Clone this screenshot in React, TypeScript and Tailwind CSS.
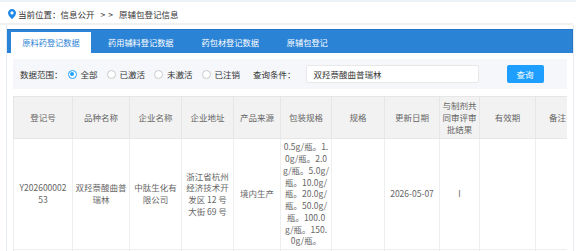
import React from "react";

const font = { fontFamily: '"Noto Sans CJK SC", "Noto Sans", sans-serif' };

function Radio({ checked, label }: { checked?: boolean; label: string }) {
  return (
    <div className="flex items-center">
      <span
        className={
          checked
            ? "w-[9px] h-[9px] rounded-full border border-[#1e9fff] bg-white flex items-center justify-center"
            : "w-[9px] h-[9px] rounded-full border border-[#c9c9c9] bg-white"
        }
      >
        {checked && <span className="w-[4px] h-[4px] rounded-full bg-[#1e9fff]" />}
      </span>
      <span className="ml-[4px] text-[#333]">{label}</span>
    </div>
  );
}

const cols = [59, 57, 52, 52, 47, 51, 53, 55, 40, 56, 44];
const headers = ["登记号", "品种名称", "企业名称", "企业地址", "产品来源", "包装规格", "规格", "更新日期", "与制剂共同审评审批结果", "有效期", "备注"];
const row = [
  "Y20260000253",
  "双羟萘酸曲普瑞林",
  "中肽生化有限公司",
  "浙江省杭州经济技术开发区 12 号大街 69 号",
  "境内生产",
  "0.5g/瓶。1.0g/瓶。2.0g/瓶。5.0g/瓶。10.0g/瓶。20.0g/瓶。50.0g/瓶。100.0g/瓶。150.0g/瓶。",
  "",
  "2026-05-07",
  "I",
  "",
  "",
];

export default function App() {
  return (
    <div className="w-[576px] h-[251px] overflow-hidden bg-white text-[8.5px]" style={font}>
      <div className="h-[2px] bg-[#eef3fa]" />
      <div className="h-[21px] pt-[3px] flex items-center pl-[8px] text-[#333]">
        <svg width="8" height="10" viewBox="0 0 16 20" className="mr-[2px]">
          <path d="M8 0C3.6 0 0 3.5 0 7.8 0 13.5 8 20 8 20s8-6.5 8-12.2C16 3.5 12.4 0 8 0z" fill="#1e88e5" />
          <circle cx="8" cy="7.8" r="3.2" fill="#fff" />
        </svg>
        <span>当前位置：信息公开</span>
        <span className="ml-[6px]">&gt;</span>
        <span className="ml-[3px]">&gt;</span>
        <span className="ml-[6px]">原辅包登记信息</span>
      </div>
      <div className="h-[2px] w-[573px] bg-[#f1f1f1]" />
      <div className="ml-[6px] w-[568px] border-x border-[#e6ebf2] pt-[4px] h-[300px]">
        <div className="h-[24px] bg-[#2b83d6] border-t border-r border-[#2576c6] flex items-end pl-[4px] text-[8.2px]">
          <div className="w-[80px] h-[21px] bg-white text-[#2b83d6] flex items-center justify-center">原料药登记数据</div>
          <div className="h-[21px] flex items-center pl-[17px] gap-[28px] text-white">
            <span>药用辅料登记数据</span>
            <span>药包材登记数据</span>
            <span>原辅包登记</span>
          </div>
        </div>
        <div className="mx-[6px] mt-[6px] h-[30px] bg-[#f5f7fa] flex items-center pl-[7px] text-[#333]">
          <span>数据范围：</span>
          <div className="ml-[5px] flex items-center gap-[9px]">
            <Radio checked label="全部" />
            <Radio label="已激活" />
            <Radio label="未激活" />
            <Radio label="已注销" />
          </div>
          <span className="ml-[13px]">查询条件：</span>
          <div className="ml-[10px] w-[173px] h-[18px] bg-white border border-[#e8e8e8] rounded-[2px] flex items-center pl-[7px] text-[#333]">
            双羟萘酸曲普瑞林
          </div>
          <button className="ml-[28px] w-[37px] h-[18px] bg-[#1e9fff] text-white rounded-[2px] flex items-center justify-center">
            查询
          </button>
        </div>
        <div className="mx-[6px] mt-[7px] overflow-hidden">
          <table className="border-collapse table-fixed text-[#666] w-[566px]">
            <colgroup>
              {cols.map((w, i) => (
                <col key={i} style={{ width: w }} />
              ))}
            </colgroup>
            <thead>
              <tr className="h-[42px] bg-[#f2f2f2]">
                {headers.map((h, i) => (
                  <th key={i} className="border border-[#e6e6e6] px-[2px] py-[3px] font-normal leading-[11.75px] text-center align-middle">
                    {h}
                  </th>
                ))}
              </tr>
            </thead>
            <tbody>
              <tr>
                {row.map((c, i) => (
                  <td
                    key={i}
                    className={
                      i === 0
                        ? "border border-[#eeeeee] px-[4px] py-[2px] leading-[11.75px] text-center align-middle break-all"
                        : "border border-[#eeeeee] px-[2px] py-[2px] leading-[11.75px] text-center align-middle break-all"
                    }
                  >
                    {c}
                  </td>
                ))}
              </tr>
              <tr className="h-[30px]">
                {row.map((_, i) => (
                  <td key={i} className="border border-[#eeeeee]" />
                ))}
              </tr>
            </tbody>
          </table>
        </div>
      </div>
    </div>
  );
}
